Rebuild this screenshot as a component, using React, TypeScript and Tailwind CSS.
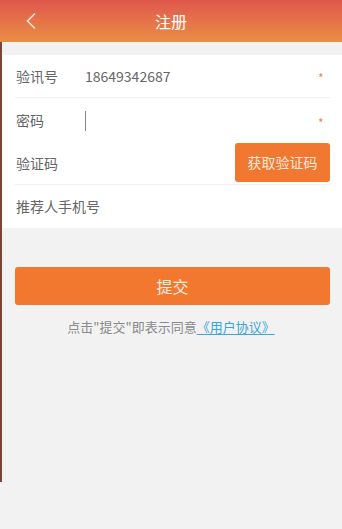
export default function App() {
  const font = { fontFamily: '"Noto Sans CJK SC", "Noto Sans", sans-serif' };
  return (
    <main
      className="relative min-h-[529px] w-full bg-[#f2f2f2] flex flex-col"
      style={font}
    >
      {/* left edge artifact */}
      <div className="absolute left-0 top-[24px] h-[458px] w-[2px] bg-[#7a4634]" />

      {/* Header */}
      <header className="h-[42px] flex items-center relative bg-gradient-to-b from-[#df564c] to-[#e98d44]">
        <button className="absolute left-[22px] top-[11px] w-[18px] h-[20px] flex items-center justify-center">
          <svg width="12" height="18" viewBox="0 0 12 18" fill="none">
            <path d="M10 1.5L2.5 9L10 16.5" stroke="#fbe3d2" strokeWidth="1.6" />
          </svg>
        </button>
        <h1 className="flex-1 text-center text-white text-[16px] leading-none">注册</h1>
      </header>

      {/* Form */}
      <section className="mt-[13px] bg-white pl-[15px] pr-[12px]">
        <div className="h-[43px] flex items-center border-b border-[#f0f0f0]">
          <span className="w-[70px] pl-[1px] text-[14px] text-[#666]">验讯号</span>
          <span className="flex-1 text-[14px] text-[#666]">18649342687</span>
          <span className="w-[12px] text-[12px] leading-none text-[#e08a5a] pt-[4px]">*</span>
        </div>
        <div className="h-[45px] flex items-center">
          <span className="w-[70px] pl-[1px] text-[14px] text-[#666]">密码</span>
          <span className="flex-1 flex items-center">
            <span className="w-px h-[20px] bg-[#888]" />
          </span>
          <span className="w-[12px] text-[12px] leading-none text-[#e08a5a] pt-[4px]">*</span>
        </div>
        <div className="h-[42px] flex items-center border-b border-[#f0f0f0]">
          <span className="flex-1 pl-[1px] text-[14px] text-[#666]">验证码</span>
          <button className="w-[95px] h-[39px] -mt-[2px] rounded-[3px] bg-[#f07830] text-[#fde8dc] text-[14px]">
            获取验证码
          </button>
        </div>
        <div className="h-[43px] flex items-center">
          <span className="pl-[1px] text-[14px] text-[#666]">推荐人手机号</span>
        </div>
      </section>

      {/* Submit */}
      <div className="pl-[15px] pr-[12px] mt-[39px]">
        <button className="w-full h-[38px] rounded-[3px] bg-[#f27830] text-[#fdeee4] text-[16px]">
          提交
        </button>
      </div>
      <p className="mt-[13px] text-center text-[13px] text-[#8a8a8a] leading-[18px]">
        点击"提交"即表示同意
        <span className="text-[#3aa6d8] underline underline-offset-2">《用户协议》</span>
      </p>
    </main>
  );
}
